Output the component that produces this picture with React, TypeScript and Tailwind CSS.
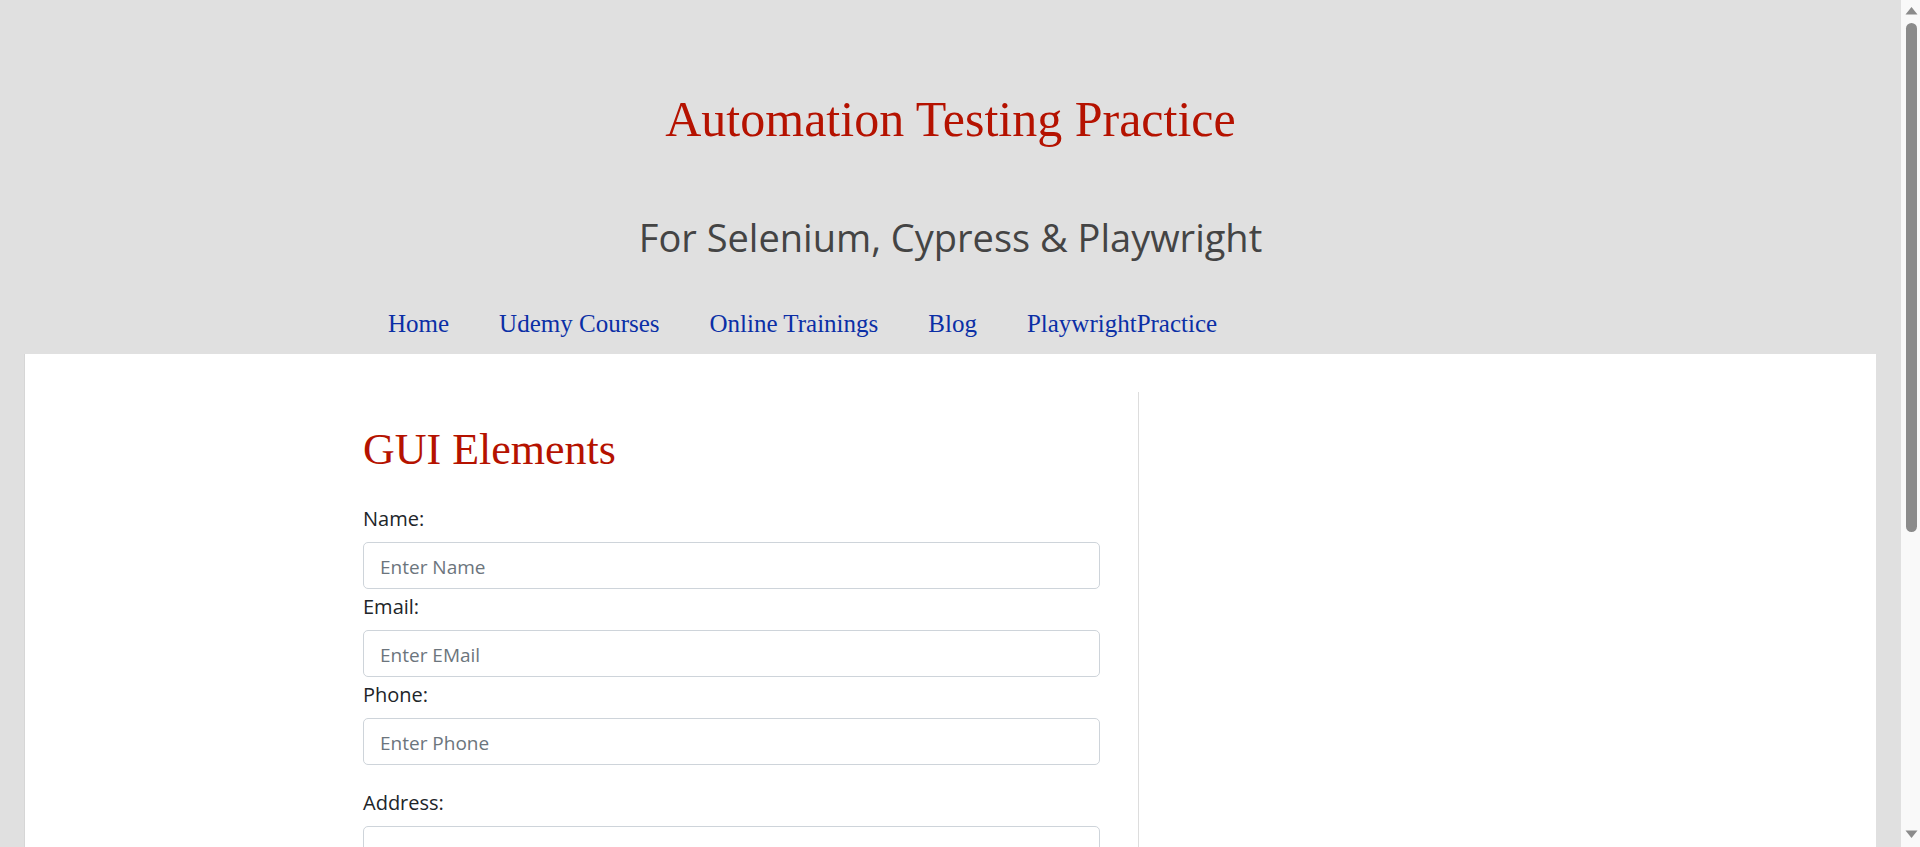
import React from "react";

const navItems = ["Home", "Udemy Courses", "Online Trainings", "Blog", "PlaywrightPractice"];

const fields = [
  { label: "Name:", placeholder: "Enter Name" },
  { label: "Email:", placeholder: "Enter EMail" },
  { label: "Phone:", placeholder: "Enter Phone" },
];

function Field({ label, placeholder, extraTop }: { label: string; placeholder?: string; extraTop?: boolean }) {
  return (
    <div className={extraTop ? "mt-[20px]" : ""}>
      <label className="block pt-[3px] text-[20px] leading-[30px] text-[#212529] mb-[8px]">{label}</label>
      <input
        type="text"
        placeholder={placeholder}
        className="block w-full h-[47px] pl-[16px] pr-[16px] pt-[3px] text-[19px] text-[#212529] placeholder:text-[#6c757d] bg-white border border-[#ced4da] rounded-[5px] outline-none"
      />
    </div>
  );
}

function Scrollbar() {
  return (
    <div className="w-[19px] h-full bg-[#f9f9f9] flex flex-col items-center pt-[6px] pb-[8px]">
      <svg width="13" height="9" viewBox="0 0 13 9" className="ml-[2px]">
        <path d="M6.5 1 L12.5 8.5 L0.5 8.5 Z" fill="#8b8b8b" />
      </svg>
      <div className="mt-[8px] ml-[2px] w-[11px] h-[509px] rounded-full bg-[#8b8b8b]" />
      <div className="flex-1" />
      <svg width="13" height="9" viewBox="0 0 13 9" className="ml-[2px]">
        <path d="M0.5 0.5 L12.5 0.5 L6.5 8 Z" fill="#8b8b8b" />
      </svg>
    </div>
  );
}

export default function App() {
  return (
    <div className="flex h-[847px] w-full overflow-hidden" style={{ fontFamily: '"Open Sans", "Noto Sans", sans-serif' }}>
      <div className="flex-1 min-w-0 flex flex-col bg-[#e0e0e0]">
        <header className="pt-[89px] text-center">
          <h1 className="text-[50px] leading-[60px] text-[#b51200] font-normal font-['Liberation_Serif',serif]">
            Automation Testing Practice
          </h1>
          <p className="mt-[64px] text-[38px] leading-[48px] text-[#444444]">For Selenium, Cypress &amp; Playwright</p>
        </header>
        <nav className="w-[1175px] mx-auto mt-[48px] pb-[15px]">
          <ul className="flex font-['Liberation_Serif',serif] text-[25px] leading-[30px]">
            {navItems.map((item) => (
              <li key={item} className="px-[25px]">
                <a href="#" className="text-[#0b2fa6]">
                  {item}
                </a>
              </li>
            ))}
          </ul>
        </nav>
        <main className="flex-1 mx-[25px] bg-white shadow-[-1px_0_0_#d6d6d6]">
          <div className="w-[1175px] mx-auto pt-[38px] flex h-full">
            <section className="w-[775px] pr-[38px]">
              <h2 className="mt-[32px] text-[44px] leading-[52px] text-[#b51200] font-normal font-['Liberation_Serif',serif]">
                GUI Elements
              </h2>
              <div className="mt-[25px]">
                {fields.map((f) => (
                  <Field key={f.label} label={f.label} placeholder={f.placeholder} />
                ))}
                <Field label="Address:" extraTop />
              </div>
            </section>
            <aside className="w-[400px] border-l border-[#dddddd]" />
          </div>
        </main>
      </div>
      <Scrollbar />
    </div>
  );
}
